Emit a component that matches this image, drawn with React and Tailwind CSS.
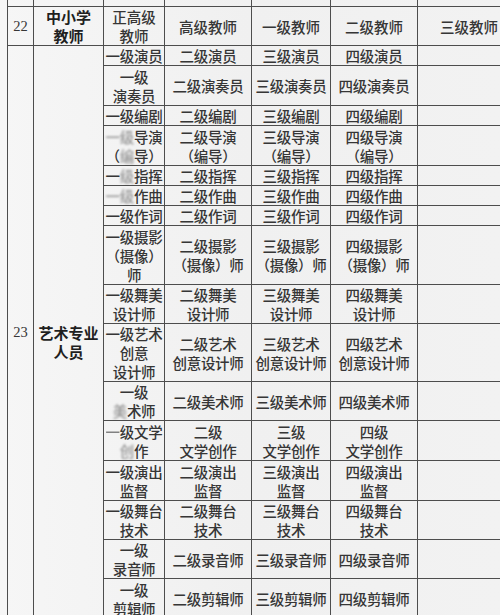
const B = ({ children }) => (
  <span className="blur-[1.2px] opacity-50">{children}</span>
);

const rows = [
  { h: 19, c: [['一级演员'], ['二级演员'], ['三级演员'], ['四级演员']] },
  { h: 40, c: [['一级', '演奏员'], ['二级演奏员'], ['三级演奏员'], ['四级演奏员']] },
  { h: 17, c: [['一级编剧'], ['二级编剧'], ['三级编剧'], ['四级编剧']] },
  {
    h: 40,
    c: [
      [<><B>一级</B>导演</>, <>（<B>编</B>导）</>],
      ['二级导演', '（编导）'],
      ['三级导演', '（编导）'],
      ['四级导演', '（编导）'],
    ],
  },
  { h: 19, c: [[<>一<B>级</B>指挥</>], ['二级指挥'], ['三级指挥'], ['四级指挥']] },
  { h: 19, c: [[<><B>一级</B>作曲</>], ['二级作曲'], ['三级作曲'], ['四级作曲']] },
  { h: 20, c: [['一级作词'], ['二级作词'], ['三级作词'], ['四级作词']] },
  {
    h: 59,
    c: [
      ['一级摄影', '（摄像）', '师'],
      ['二级摄影', '（摄像）师'],
      ['三级摄影', '（摄像）师'],
      ['四级摄影', '（摄像）师'],
    ],
  },
  { h: 39, c: [['一级舞美', '设计师'], ['二级舞美', '设计师'], ['三级舞美', '设计师'], ['四级舞美', '设计师']] },
  {
    h: 58,
    c: [
      ['一级艺术', '创意', '设计师'],
      ['二级艺术', '创意设计师'],
      ['三级艺术', '创意设计师'],
      ['四级艺术', '创意设计师'],
    ],
  },
  { h: 38, c: [['一级', <><B>美</B>术师</>], ['二级美术师'], ['三级美术师'], ['四级美术师']] },
  {
    h: 40,
    c: [
      [<><span className="opacity-60">一</span>级文学</>, <><B>创</B>作</>],
      ['二级', '文学创作'],
      ['三级', '文学创作'],
      ['四级', '文学创作'],
    ],
  },
  { h: 40, c: [['一级演出', '监督'], ['二级演出', '监督'], ['三级演出', '监督'], ['四级演出', '监督']] },
  { h: 38, c: [['一级舞台', '技术'], ['二级舞台', '技术'], ['三级舞台', '技术'], ['四级舞台', '技术']] },
  { h: 38, c: [['一级', '录音师'], ['二级录音师'], ['三级录音师'], ['四级录音师']] },
  { h: 40, c: [['一级', '剪辑师'], ['二级剪辑师'], ['三级剪辑师'], ['四级剪辑师']] },
];

const td = 'border border-[#4d4d4d] text-center align-middle p-0 whitespace-nowrap';

function Lines({ lines }) {
  return lines.map((l, i) => (
    <div key={i}>{l}</div>
  ));
}

export default function App() {
  return (
    <div className="w-[500px] h-[615px] overflow-hidden bg-gradient-to-r from-[#f6f6f6] via-[#f0f0f0] to-[#f2f2f2]">
      <div
        className="w-[520px] pl-[7px] -mt-[14px] text-[14.5px] leading-[19px] text-[#363636] font-medium"
        style={{ fontFamily: '"Noto Sans CJK SC", sans-serif' }}
      >
        <table className="table-fixed border-collapse w-[513px]">
          <colgroup>
            <col className="w-[26px]" />
            <col className="w-[70px]" />
            <col className="w-[61px]" />
            <col className="w-[87px]" />
            <col className="w-[79px]" />
            <col className="w-[87px]" />
            <col className="w-[103px]" />
          </colgroup>
          <tbody>
            <tr className="h-[19px]">
              <td className={td}></td>
              <td className={td}></td>
              <td className={td + ' align-bottom'}>
                <div className="-translate-y-[5px]">技术</div>
              </td>
              <td className={td}></td>
              <td className={td}></td>
              <td className={td}></td>
              <td className={td}></td>
            </tr>
            <tr className="h-[38px]">
              <td className={td + ' font-normal'} style={{ fontFamily: '"Liberation Serif", serif' }}>22</td>
              <td className={td + ' font-bold text-[#1f1f1f] text-[15px]'}>
                <div>中小学</div>
                <div>教师</div>
              </td>
              <td className={td}>
                <div>正高级</div>
                <div>教师</div>
              </td>
              <td className={td}>高级教师</td>
              <td className={td}>一级教师</td>
              <td className={td}>二级教师</td>
              <td className={td}>三级教师</td>
            </tr>
            {rows.map((r, i) => (
              <tr key={i} style={{ height: r.h }}>
                {i === 0 && (
                  <>
                    <td
                      rowSpan={rows.length}
                      className={td + ' font-normal'}
                      style={{ fontFamily: '"Liberation Serif", serif' }}
                    >
                      23
                    </td>
                    <td rowSpan={rows.length} className={td + ' font-bold text-[#1f1f1f] text-[15px] pt-[20px]'}>
                      <div>艺术专业</div>
                      <div>人员</div>
                    </td>
                  </>
                )}
                {r.c.map((lines, j) => (
                  <td key={j} className={td + ' tracking-[-0.3px]'}>
                    <Lines lines={lines} />
                  </td>
                ))}
                <td className={td}></td>
              </tr>
            ))}
          </tbody>
        </table>
      </div>
    </div>
  );
}
